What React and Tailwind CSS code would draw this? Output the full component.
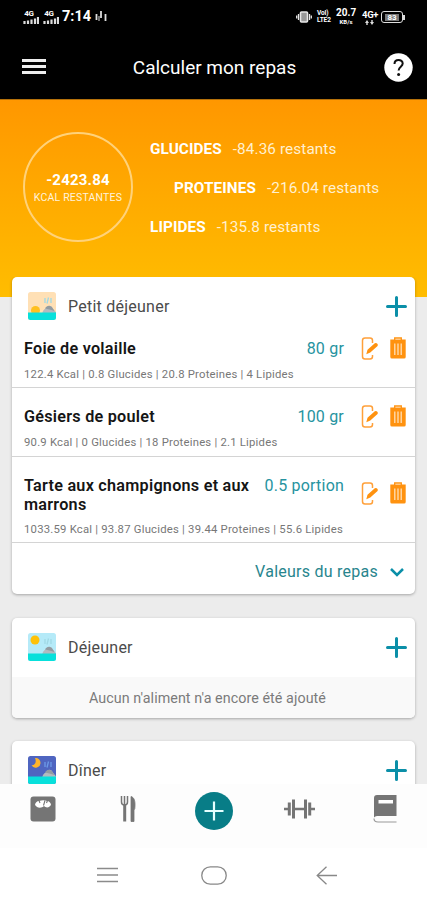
import React from "react";

function MealIcon({ sky, night, morning }) {
  return (
    <svg className="mb-px h-7 w-7 shrink-0" viewBox="0 0 28 28">
      <defs>
        <clipPath id={"clip" + sky.slice(1)}>
          <rect width="28" height="28" rx="2.5" />
        </clipPath>
      </defs>
      <g clipPath={"url(#clip" + sky.slice(1) + ")"}>
        <rect width="28" height="28" fill={sky} />
        {morning && <circle cx="7.500" cy="18.500" r="4.500" fill="#ffc01f" />}
        {night && <path d="M7 2a4.800 4.800 0 1 1-3.500 7.200C7 9.600 8.800 6 7 2z" fill="#ffb52b" />}
        {!morning && !night && <circle cx="7" cy="7" r="4.500" fill="#ffc107" />}
        <path d="M17 6v5M20.500 5.500l-1.500 6M23 6v5" stroke={night ? "#6d9be8" : "#a0d8e4"} strokeWidth="1.300" fill="none" />
        <path d="M14 22c1-4 2.500-5 4.500-6 1-3 5-3 6 0l4 5v1z" fill="#b3babf" />
        <path d="M17 16.500c2-4 6-3.500 7.500-.5l2 3-5-1.500z" fill="#929ba1" />
        <rect y="20.500" width="28" height="8" fill="#08e0db" />
      </g>
    </svg>
  );
}

function Plus() {
  return (
    <svg className="mb-px h-[21px] w-[21px] shrink-0" viewBox="0 0 21 21" stroke="#0b8fa8" strokeWidth="3" strokeLinecap="round">
      <path d="M10.500 1.500v18M1.500 10.500h18" />
    </svg>
  );
}

function EditIcon() {
  return (
    <svg className="h-[23px] w-[17px] shrink-0" viewBox="0 0 17 23" fill="none">
      <path d="M11.500 6V3.500Q11.500 1 9 1H4Q1.500 1 1.500 3.500v16Q1.500 22 4 22h5q2.500 0 2.500-2.500V18" stroke="#ffa03a" strokeWidth="1.500" />
      <path d="M5.300 17.200l1.200-4.500 7.300-6.400q1.500-.8 2.500.4t0 2.500l-7 6.400z" fill="#ff920f" />
    </svg>
  );
}

function TrashIcon() {
  return (
    <svg className="h-[22px] w-4 shrink-0" viewBox="0 0 16 22" fill="none">
      <path d="M4.700 3V1h6.600v2" stroke="#ff920f" strokeWidth="1.300" />
      <path d="M.3 2.500h15.400V20q0 1.600-1.600 1.600H1.900Q.3 21.600.3 20z" fill="#ff920f" />
      <path d="M4.800 6.500v11.500M8 6.500v11.500M11.200 6.500v11.500" stroke="#ffe0b8" strokeWidth="1.300" />
    </svg>
  );
}

function CardHeader({ title, icon }) {
  return (
    <div className="flex h-[59px] items-center pr-2 pl-4">
      {icon}
      <span className="ml-3 flex-1 pt-px text-[16px] tracking-[0.24px] text-[#4b4b4b]">{title}</span>
      <Plus />
    </div>
  );
}

function FoodRow({ name, qty, detail, height, titleTop, iconTop }) {
  return (
    <div className={"flex flex-col justify-end border-b border-[#d4d4d4] pr-[9px] pl-3 " + height}>
      <div className="flex flex-1 items-start">
        <div className={"flex-1 text-[16.200px] leading-[19px] font-semibold tracking-[0.25px] whitespace-pre-line text-[#151515] " + titleTop}>{name}</div>
        <div className={"text-[16px] leading-[19px] tracking-[0.2px] text-[#2693a0] " + titleTop}>{qty}</div>
        <div className={"ml-[17px] flex gap-[12px] " + iconTop}>
          <EditIcon />
          <TrashIcon />
        </div>
      </div>
      <div className="text-[11.300px] leading-[14px] tracking-[0.220px] text-[#777]">{detail}</div>
    </div>
  );
}

const card = "shrink-0 overflow-hidden rounded-[5px] bg-white shadow-[0_1px_3px_rgba(0,0,0,0.3)]";

export default function App() {
  return (
    <div className="flex h-[900px] w-[427px] flex-col overflow-hidden bg-[#ececec] font-['Roboto',sans-serif] whitespace-nowrap">
      <header className="h-[99px] shrink-0 bg-black text-white">
        <div className="flex h-[34px] items-center pr-[22px] pl-[23px]">
          <div className="flex items-center gap-1">
            <Signal />
            <Signal />
            <span className="-ml-px text-[14.500px] leading-4 font-bold">7:14</span>
            <svg className="h-3 w-3" viewBox="0 0 12 12" stroke="#ddd" strokeWidth="1.800">
              <path d="M1.500 3v6M6 0v7M10.500 3v7" /><path d="M4 5v5" strokeWidth="1" />
            </svg>
          </div>
          <div className="ml-auto flex items-center">
            <svg className="h-3 w-4" viewBox="0 0 16 12" fill="none" stroke="#e8e8e8">
              <rect x="4.500" y="1" width="7" height="10" rx="1" fill="#999" strokeWidth="1.600" />
              <path d="M2.500 3v6M.7 4.500v3M13.500 3v6M15.300 4.500v3" strokeWidth="1.300" />
            </svg>
            <div className="ml-[5px] w-4 text-[6.500px] leading-[7px] font-bold tracking-[-0.1px]">
              <div>VoI)</div><div>LTE2</div>
            </div>
            <div className="ml-[3px] w-5 text-center font-bold">
              <div className="text-[10px] leading-[10px]">20.7</div><div className="text-[6px] leading-[8px]">KB/s</div>
            </div>
            <div className="ml-[6px] w-[15px] text-center font-bold">
              <div className="text-[9.500px] leading-[10px] tracking-[-0.3px]">4G+</div>
              <svg className="mx-auto h-[5px] w-[9px]" viewBox="0 0 9 5" fill="#ddd"><path d="M0 3l2-3 2 3H2.700v2H1.300V3zM5 2l2 3 2-3H7.700V0H6.300v2z" /></svg>
            </div>
            <div className="ml-[4px] flex h-[12px] w-[22px] items-center justify-center rounded-[3px] border-[1.500px] border-[#ddd]">
              <span className="bg-[#777] px-[2px] text-[8px] leading-[7px] font-bold">83</span>
            </div>
            <div className="h-[5px] w-[2px] bg-[#ddd]" />
          </div>
        </div>
        <div className="flex h-[65px] items-center pt-px pr-[14px] pl-[22px]">
          <div className="mb-px flex w-6 flex-col gap-[3px]">
            <div className="h-[3px] bg-[#eee]" /><div className="h-[3px] bg-[#eee]" /><div className="h-[3px] bg-[#eee]" />
          </div>
          <h1 className="flex-1 pt-[2px] pr-px text-center text-[19px]">Calculer mon repas</h1>
          <svg className="h-[29px] w-[29px]" viewBox="0 0 29 29">
            <circle cx="14.500" cy="14.500" r="14.200" fill="#fff" />
            <path d="M10.500 10.900c0-5.300 8.200-5.100 8.200-.3 0 3.100-4.100 3.300-4.100 7" stroke="#111" strokeWidth="2" fill="none" />
            <circle cx="14.600" cy="21.400" r="1.500" fill="#111" />
          </svg>
        </div>
      </header>

      <section className="flex h-[198px] shrink-0 border-t border-[#b4700a] bg-linear-to-b from-[#ff9700] to-[#ffbd00] text-white">
        <div className="mt-[32px] ml-[23px] flex h-[110px] w-[110px] flex-col items-center rounded-full border-2 border-[#ffd27a] pt-[37px]">
          <div className="text-[15px] leading-[19px] font-bold tracking-[0.2px]">-2423.84</div>
          <div className="text-[10.500px] leading-[15px] tracking-[0.2px] text-[#fff3dc]">KCAL RESTANTES</div>
        </div>
        <div className="mt-[39px] ml-[17px] flex flex-col gap-[19px] text-[15.300px] leading-5 tracking-[0.1px] text-[#fff0d0]">
          <div className="flex gap-[11px]"><b className="text-white">GLUCIDES</b><span>-84.36 restants</span></div>
          <div className="ml-6 flex gap-[11px]"><b className="text-white">PROTEINES</b><span>-216.04 restants</span></div>
          <div className="flex gap-[11px]"><b className="text-white">LIPIDES</b><span>-135.8 restants</span></div>
        </div>
      </section>

      <main className="-mt-[20px] flex h-[507px] shrink-0 flex-col overflow-hidden px-3">
        <div className={card + " h-[317px]"}>
          <CardHeader title="Petit déjeuner" icon={<MealIcon sky="#ffe0b5" morning />} />
          <div className="-mt-[6px]">
            <FoodRow name="Foie de volaille" qty="80 gr" detail="122.4 Kcal | 0.8 Glucides | 20.8 Proteines | 4 Lipides" height="h-[58px] pb-[5px]" titleTop="pt-[9px]" iconTop="pt-[7px]" />
            <FoodRow name="Gésiers de poulet" qty="100 gr" detail="90.9 Kcal | 0 Glucides | 18 Proteines | 2.1 Lipides" height="h-[69px] pb-[6px]" titleTop="pt-[19px]" iconTop="pt-[17px]" />
            <FoodRow name={"Tarte aux champignons et aux\nmarrons"} qty="0.5 portion" detail="1033.59 Kcal | 93.87 Glucides | 39.44 Proteines | 55.6 Lipides" height="h-[86px] pb-[5px]" titleTop="pt-[19px]" iconTop="pt-[25px]" />
          </div>
          <div className="flex h-[56px] items-center justify-end pt-[2px] pr-[11px] text-[16px] tracking-[0.25px] text-[#28858d]">
            Valeurs du repas
            <svg className="ml-3 h-[9px] w-[14px]" viewBox="0 0 14 9" fill="none" stroke="#0b8fa8" strokeWidth="2.500"><path d="M1 1l6 6 6-6" /></svg>
          </div>
        </div>

        <div className={card + " mt-6 h-[100px]"}>
          <CardHeader title="Déjeuner" icon={<MealIcon sky="#b5eaf8" />} />
          <div className="h-[41px] bg-[#f9f9f9] pr-3 text-center text-[14.300px] leading-[42px] tracking-[0.06px] text-[#7b7b7b]">Aucun n'aliment n'a encore été ajouté</div>
        </div>

        <div className={card + " mt-[23px] h-[100px]"}>
          <CardHeader title="Dîner" icon={<MealIcon sky="#4f65c0" night />} />
        </div>
      </main>

      <footer className="h-[116px] shrink-0 bg-white">
        <nav className="flex h-[64px] bg-[#fdfdfd] text-[#757575]">
          <div className="flex flex-1 justify-center pt-[12px]">
            <svg className="h-[26px] w-[26px]" viewBox="0 0 26 26">
              <rect x=".5" y=".5" width="25" height="25" rx="3" fill="currentColor" />
              <path d="M5 9c0-2 2-4 4-4 3-1 6-1 8 0 2 0 4 2 4 4l-2 2c-2 1-4 0-5-1-2 2-5 2-7 1z" fill="#fff" />
              <path d="M9 4.500l1 2.500M13.500 9.500l1.500-5M17.500 4.500L16.500 7" stroke="currentColor" strokeWidth="1.100" />
            </svg>
          </div>
          <div className="flex flex-1 justify-center pt-[12px]">
            <svg className="h-[26px] w-4" viewBox="0 0 16 26" fill="none" stroke="currentColor">
              <path d="M1.500 0v6q0 3 3 3t3-3V0M4.500 0v9" strokeWidth="1.500" />
              <path d="M4.700 9v16.500" strokeWidth="3" />
              <path d="M11 .5c3.500 1 4.500 5 3.800 12L14 14v11.500h-3z" strokeWidth=".8" fill="currentColor" />
            </svg>
          </div>
          <div className="flex flex-1 justify-center pt-[8px] pl-px">
            <svg className="h-[38px] w-[38px]" viewBox="0 0 38 38">
              <circle cx="19" cy="19" r="19" fill="#087d87" />
              <path d="M19 9.500v19M9.500 19h19" stroke="#e5ffff" strokeWidth="2.200" />
            </svg>
          </div>
          <div className="flex flex-1 justify-center pt-[15px] pl-px">
            <svg className="h-5 w-[31px]" viewBox="0 0 31 20" stroke="currentColor" strokeWidth="3">
              <path d="M9.500.5v19M21.500.5v19" /><path d="M5.300 3.500v13M25.700 3.500v13" strokeWidth="3" /><path d="M0 10h4M27 10h4M10 10h11" strokeWidth="2.500" />
            </svg>
          </div>
          <div className="flex flex-1 justify-center pt-[11px]">
            <svg className="h-[28px] w-[24px]" viewBox="0 0 24 28">
              <path d="M4 0h19.500v21H4q-2 0-3 1.500V3Q1 0 4 0z" fill="currentColor" />
              <path d="M5.500 5H20v3.500H5.500z" fill="#fff" />
              <path d="M23.500 27H5q-4 0-4-3.500" fill="none" stroke="#999" strokeWidth="1.200" />
            </svg>
          </div>
        </nav>
        <div className="flex h-[52px] items-center pt-[2px] pl-[97px]">
          <svg className="h-4 w-[21px]" viewBox="0 0 21 16" stroke="#8b8b8b" strokeWidth="1.300"><path d="M0 1.500h21M0 8h21M0 14.500h21" /></svg>
          <svg className="ml-[83px] h-[19px] w-[26px]" viewBox="0 0 26 19"><rect x=".8" y=".8" width="24.400" height="17.400" rx="8.500" fill="none" stroke="#888" strokeWidth="1.300" /></svg>
          <svg className="ml-[89px] h-[19px] w-[21px]" viewBox="0 0 21 19" fill="none" stroke="#888" strokeWidth="1.300"><path d="M10.500.8L1.200 9.500l9.300 8.700M1.200 9.500H21" /></svg>
        </div>
      </footer>
    </div>
  );
}

function Signal() {
  return (
    <div className="w-4">
      <div className="pr-1 text-center text-[8px] leading-[6px] font-bold tracking-[-0.3px]">4G</div>
      <svg className="h-[7px] w-4" viewBox="0 0 16 7" stroke="#ddd" strokeWidth="2.200">
        <path d="M1.500 4v3M5 3.500V7M8.500 2.500V7M12 1.500V7M15 0v7" />
      </svg>
    </div>
  );
}
